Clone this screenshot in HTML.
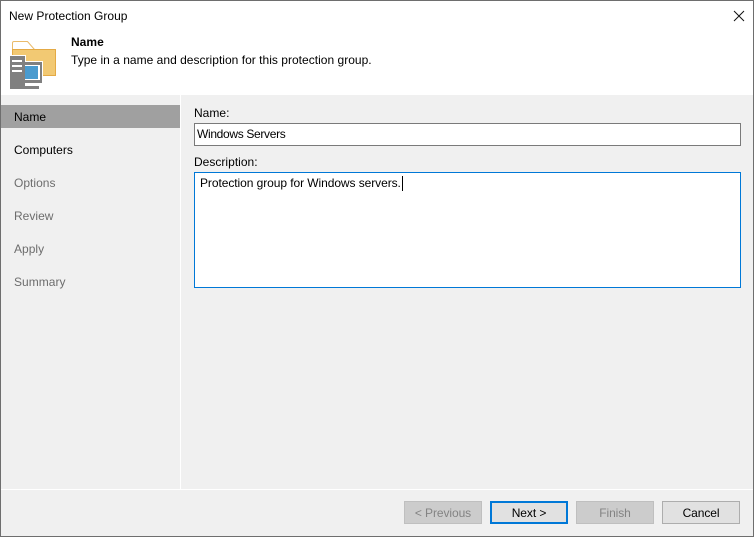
<!DOCTYPE html>
<html><head><meta charset="utf-8"><style>
html,body{margin:0;padding:0}
body{width:754px;height:537px;overflow:hidden;position:relative;background:#f0f0f0;font:12px "Liberation Sans",sans-serif;color:#000}
div{position:absolute;box-sizing:border-box;white-space:nowrap}
.t{line-height:14px;letter-spacing:.02px}
.btn{top:501px;width:78px;height:23px;border:1px solid #adadad;background:#e1e1e1;text-align:center;line-height:23px;letter-spacing:-.08px}
.dis{background:#cccccc;border-color:#bfbfbf;color:#838383}
</style></head><body>
<div style="left:0;top:0;width:754px;height:95px;background:#fff"></div>
<div class="t" style="left:9px;top:9px">New Protection Group</div>
<svg style="position:absolute;left:733px;top:10px" width="12" height="12" viewBox="0 0 12 12"><path d="M1 1L11 11M11 1L1 11" stroke="#111" stroke-width="1" fill="none"/></svg>
<svg style="position:absolute;left:0;top:0" width="70" height="95" viewBox="0 0 70 95">
<path d="M12.500 49.500V43Q12.500 41.500 14 41.500H27.500L34.500 49.500Z" fill="#fff" stroke="#eabb6a"/>
<rect x="12.500" y="49.500" width="43" height="26" fill="#f2c973" stroke="#e4aa45"/>
<rect x="9" y="55" width="17" height="35" fill="#fff" shape-rendering="crispEdges"/>
<g shape-rendering="crispEdges">
<rect x="25" y="61" width="18" height="23" fill="#fff"/>
<rect x="25" y="62" width="17" height="21" fill="#808080"/>
<rect x="25" y="65" width="15" height="15" fill="#fff"/>
<rect x="25" y="66" width="13" height="13" fill="#4a9bcf"/>
<rect x="25" y="83" width="15" height="7" fill="#fff"/>
<rect x="25" y="86" width="14" height="3" fill="#808080"/>
<rect x="10" y="56" width="15" height="33" fill="#808080"/>
<rect x="12" y="60" width="10" height="2" fill="#fff"/>
<rect x="12" y="65" width="10" height="2" fill="#fff"/>
<rect x="12" y="70" width="10" height="2" fill="#fff"/>
</g>
</svg>
<div class="t" style="left:71px;top:35px;font-weight:bold">Name</div>
<div class="t" style="left:71px;top:53px">Type in a name and description for this protection group.</div>

<div style="left:1px;top:105px;width:179px;height:23px;background:#a0a0a0"></div>
<div style="left:180px;top:95px;width:1px;height:394px;background:#fff"></div>
<div style="left:1px;top:489px;width:752px;height:1px;background:#fff"></div>
<div class="t" style="left:14px;top:110px">Name</div>
<div class="t" style="left:14px;top:143px">Computers</div>
<div class="t" style="left:14px;top:176px;color:#6d6d6d">Options</div>
<div class="t" style="left:14px;top:209px;color:#6d6d6d">Review</div>
<div class="t" style="left:14px;top:242px;color:#6d6d6d">Apply</div>
<div class="t" style="left:14px;top:275px;color:#6d6d6d">Summary</div>

<div class="t" style="left:194px;top:106px">Name:</div>
<div style="left:194px;top:123px;width:547px;height:23px;background:#fff;border:1px solid #7a7a7a"></div>
<div class="t" style="left:197px;top:127px;letter-spacing:-.33px">Windows Servers</div>
<div class="t" style="left:194px;top:155px">Description:</div>
<div style="left:194px;top:172px;width:547px;height:116px;background:#fff;border:1px solid #0078d7"></div>
<div class="t" style="left:200px;top:176px;letter-spacing:-.07px">Protection group for Windows servers.</div>
<div style="left:402px;top:176px;width:1px;height:15px;background:#000"></div>

<div class="btn dis" style="left:404px">&lt; Previous</div>
<div class="btn" style="left:490px;border:2px solid #0078d7;line-height:21px">Next &gt;</div>
<div class="btn dis" style="left:576px">Finish</div>
<div class="btn" style="left:662px">Cancel</div>

<div style="left:0;top:0;width:754px;height:537px;border:1px solid #6e6e6e"></div>
</body></html>
